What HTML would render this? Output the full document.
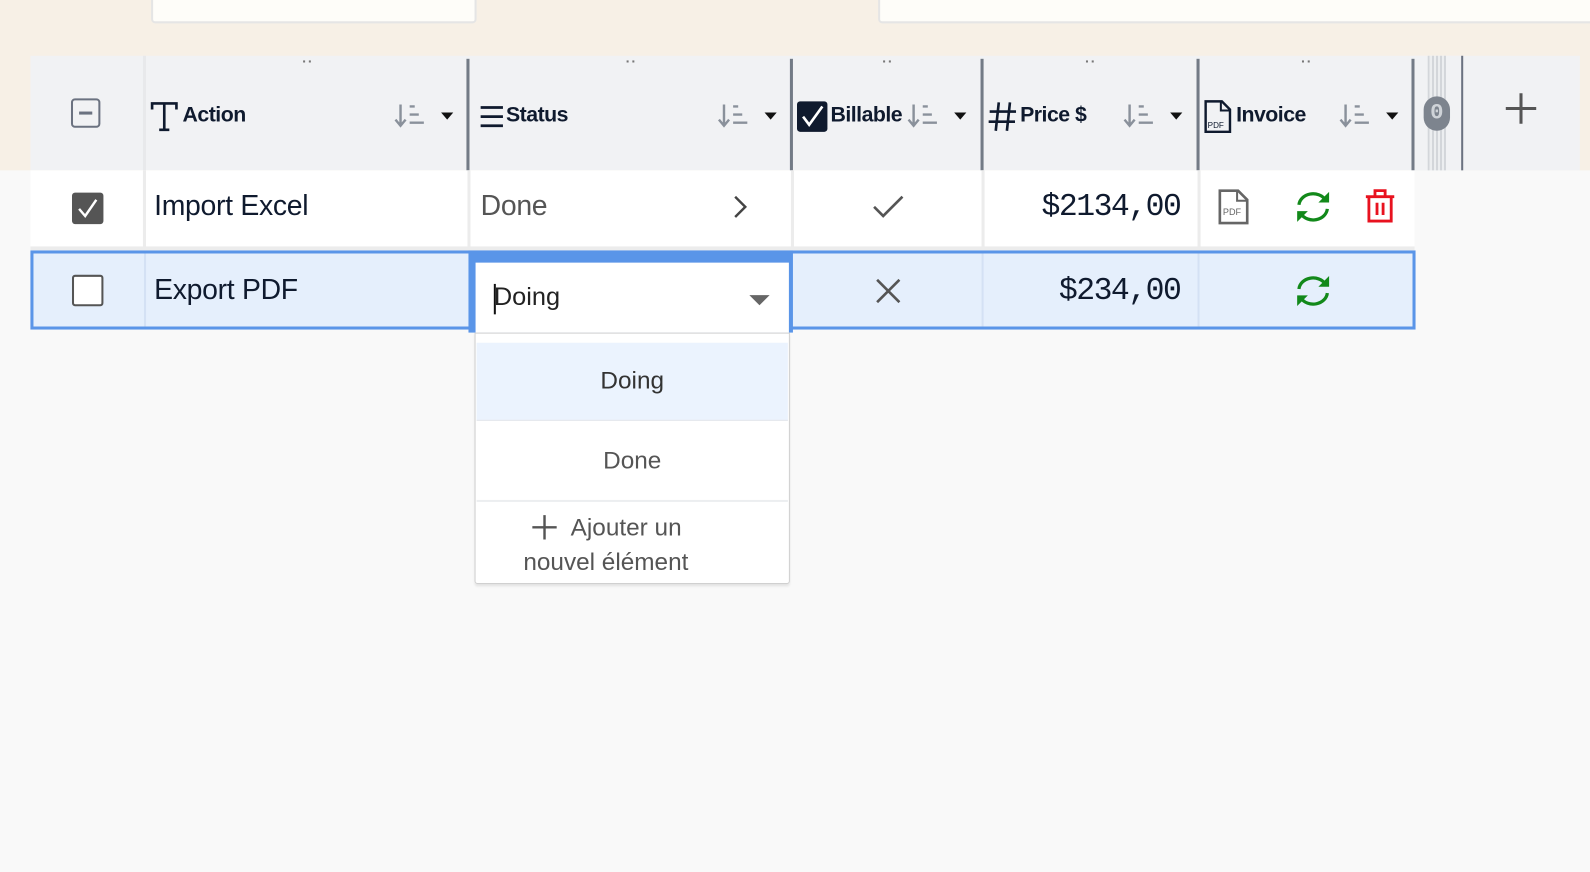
<!DOCTYPE html>
<html><head><meta charset="utf-8"><style>
*{margin:0;padding:0;box-sizing:border-box}
body{width:1590px;height:872px;background:#f9f9f9;position:relative;overflow:hidden;font-family:"Liberation Sans",sans-serif;color:#0f1a2e}
#w{position:absolute;left:0;top:0;width:1568px;height:860px;transform:scale(1.014);transform-origin:0 0}
.a{position:absolute}
.hd{font-weight:bold;font-size:21px;top:102px;letter-spacing:-0.5px}
.sep{width:3px;background:#737b86;top:58px;height:110px}
.dots{top:52px;font-size:14px;color:#777;letter-spacing:1px;font-weight:bold}
.sorti{top:101px}
.rt{font-size:28px;letter-spacing:-0.3px}
.mono{font:31px 'Liberation Mono',monospace;letter-spacing:-1.5px}
</style></head><body><div id="w">
<div class="a" style="left:0;top:0;width:1590px;height:168px;background:#f7f0e6"></div>
<div class="a" style="left:149px;top:-6px;width:321px;height:29px;background:#fefdf9;border:2px solid #e5e5e5;border-radius:4px"></div>
<div class="a" style="left:866px;top:-6px;width:740px;height:29px;background:#fefdf9;border:2px solid #e5e5e5;border-radius:4px"></div>
<div class="a" style="left:30px;top:55px;width:1528px;height:113px;background:#f1f2f4"></div>
<div class="a" style="left:141px;top:55px;width:3px;height:113px;background:#e8e9eb"></div>
<div class="a" style="left:70px;top:97px;width:29px;height:29px;border:2px solid #6b7280;border-radius:4px"><div class="a" style="left:6px;top:11px;width:13px;height:2.5px;background:#6b7280"></div></div>
<svg class="a" style="left:148px;top:100px" width="28" height="30" viewBox="0 0 28 30"><path d="M2 8V2h24v6M14 2v26M9 28h10" stroke="#0f1a2e" stroke-width="2.6" fill="none"/></svg>
<div class="a hd" style="left:180px">Action</div>
<div class="a sep" style="left:460px"></div><div class="a sep" style="left:779px"></div><div class="a sep" style="left:967px"></div><div class="a sep" style="left:1180px"></div><div class="a sep" style="left:1392px"></div>
<div class="a dots" style="left:298px">··</div><div class="a dots" style="left:617px">··</div><div class="a dots" style="left:870px">··</div><div class="a dots" style="left:1070px">··</div><div class="a dots" style="left:1283px">··</div>
<svg class="a" style="left:473px;top:103px" width="24" height="24"><path d="M1 3h22M1 12h22M1 21h22" stroke="#0f1a2e" stroke-width="2.8"/></svg>
<div class="a hd" style="left:499px">Status</div>
<div class="a" style="left:786px;top:100px;width:30px;height:30px;background:#0f1a2e;border-radius:3px"></div>
<svg class="a" style="left:786px;top:100px" width="30" height="30"><path d="M6 15l6 8L25 5" stroke="#fff" stroke-width="2.6" fill="none"/></svg>
<div class="a hd" style="left:819px">Billable</div>
<svg class="a" style="left:974px;top:99px" width="30" height="32"><path d="M11 2L8 30M22 2L19 30M2 11h26M1 21h26" stroke="#0f1a2e" stroke-width="2.6"/></svg>
<div class="a hd" style="left:1006px">Price $</div>
<svg class="a" style="left:1187px;top:98px" width="28" height="34"><path d="M2 2h16l8 8v22H2z" stroke="#0f1a2e" stroke-width="2.4" fill="none"/><path d="M17 2v9h9" stroke="#0f1a2e" stroke-width="2" fill="none"/><text x="4" y="28" font-size="8" font-family="Liberation Sans" fill="#0f1a2e">PDF</text></svg>
<div class="a hd" style="left:1219px">Invoice</div>
<svg class="a sorti" style="left:389px" width="60" height="26"><g stroke="#8a919b" stroke-width="2.4" fill="none"><path d="M6 2v20M1 17l5 6 5-6M15 4h5M15 12h9M15 20h14"/></g><path d="M46 10h12l-6 7z" fill="#111"/></svg>
<svg class="a sorti" style="left:708px" width="60" height="26"><g stroke="#8a919b" stroke-width="2.4" fill="none"><path d="M6 2v20M1 17l5 6 5-6M15 4h5M15 12h9M15 20h14"/></g><path d="M46 10h12l-6 7z" fill="#111"/></svg>
<svg class="a sorti" style="left:895px" width="60" height="26"><g stroke="#8a919b" stroke-width="2.4" fill="none"><path d="M6 2v20M1 17l5 6 5-6M15 4h5M15 12h9M15 20h14"/></g><path d="M46 10h12l-6 7z" fill="#111"/></svg>
<svg class="a sorti" style="left:1108px" width="60" height="26"><g stroke="#8a919b" stroke-width="2.4" fill="none"><path d="M6 2v20M1 17l5 6 5-6M15 4h5M15 12h9M15 20h14"/></g><path d="M46 10h12l-6 7z" fill="#111"/></svg>
<svg class="a sorti" style="left:1321px" width="60" height="26"><g stroke="#8a919b" stroke-width="2.4" fill="none"><path d="M6 2v20M1 17l5 6 5-6M15 4h5M15 12h9M15 20h14"/></g><path d="M46 10h12l-6 7z" fill="#111"/></svg>
<div class="a" style="left:1395px;top:55px;width:46px;height:113px;background:#f1f2f4"></div>
<div class="a" style="left:1408px;top:55px;width:18px;height:113px;background:repeating-linear-gradient(90deg,#d3d6da 0 2px,#eceef0 2px 4px)"></div>
<div class="a" style="left:1441px;top:55px;width:2px;height:113px;background:#6b7280"></div>
<div class="a" style="left:1404px;top:95px;width:26px;height:34px;background:#7d848e;border-radius:13px;color:#cfd3d8;font:bold 22px 'Liberation Mono',monospace;text-align:center;line-height:34px">0</div>
<svg class="a" style="left:1483px;top:90px" width="34" height="34"><path d="M17 2v30M2 17h30" stroke="#555" stroke-width="3"/></svg>
<div class="a" style="left:30px;top:168px;width:1365px;height:77px;background:#fff"></div>
<div class="a" style="left:141px;top:168px;width:3px;height:77px;background:#ececec"></div>
<div class="a" style="left:461px;top:168px;width:3px;height:77px;background:#ececec"></div>
<div class="a" style="left:780px;top:168px;width:3px;height:77px;background:#ececec"></div>
<div class="a" style="left:968px;top:168px;width:3px;height:77px;background:#ececec"></div>
<div class="a" style="left:1181px;top:168px;width:3px;height:77px;background:#ececec"></div>
<div class="a" style="left:30px;top:243px;width:1365px;height:4px;background:#ececec"></div>
<div class="a" style="left:71px;top:190px;width:31px;height:31px;background:#555;border-radius:3px"></div>
<svg class="a" style="left:71px;top:190px" width="31" height="31"><path d="M7 16l6 7L24 7" stroke="#fff" stroke-width="2.4" fill="none"/></svg>
<div class="a rt" style="left:152px;top:187px">Import Excel</div>
<div class="a rt" style="left:474px;top:187px;color:#555">Done</div>
<svg class="a" style="left:722px;top:192px" width="16" height="24"><path d="M3 2l10 10L3 22" stroke="#444" stroke-width="2.4" fill="none"/></svg>
<svg class="a" style="left:860px;top:192px" width="32" height="24"><path d="M2 12l9 9L30 2" stroke="#555" stroke-width="2.6" fill="none"/></svg>
<div class="a mono" style="left:971px;top:187px;width:193px;text-align:right">$2134,00</div>
<svg class="a" style="left:1201px;top:186px" width="32" height="36"><path d="M2 2h18l9 9v23H2z" stroke="#666" stroke-width="2.6" fill="#fff"/><path d="M19 2v10h10" stroke="#666" stroke-width="2" fill="none"/><text x="5" y="26" font-size="9" font-family="Liberation Sans" fill="#666">PDF</text></svg>
<svg class="a" style="left:1277px;top:188px" width="36" height="32" viewBox="0 0 36 32"><g stroke="#12891a" stroke-width="3.2" fill="none"><path d="M4 14A14 12 0 0 1 30 9"/><path d="M32 18A14 12 0 0 1 6 23"/></g><path d="M25 11l8 0 0-8z M11 21l-8 0 0 8z" fill="#12891a" stroke="#12891a" stroke-width="1.5"/></svg>
<svg class="a" style="left:1346px;top:186px" width="30" height="36"><g stroke="#e8121f" stroke-width="2.8" fill="none"><path d="M1 8h28M10 8V2h10v6M4 8v24h22V8M12 14v12M18 14v12"/></g></svg>
<div class="a" style="left:30px;top:247px;width:1366px;height:78px;background:#e5effc;border:3px solid #5a95e8"></div>
<div class="a" style="left:142px;top:250px;width:2px;height:72px;background:#d4e1f4"></div>
<div class="a" style="left:968px;top:250px;width:2px;height:72px;background:#d4e1f4"></div>
<div class="a" style="left:1181px;top:250px;width:2px;height:72px;background:#d4e1f4"></div>
<div class="a" style="left:71px;top:271px;width:31px;height:31px;border:2.5px solid #555;border-radius:3px;background:#fff"></div>
<div class="a rt" style="left:152px;top:270px">Export PDF</div>
<svg class="a" style="left:862px;top:273px" width="28" height="28"><path d="M3 3l22 22M25 3L3 25" stroke="#555" stroke-width="2.6"/></svg>
<div class="a mono" style="left:971px;top:270px;width:193px;text-align:right">$234,00</div>
<svg class="a" style="left:1277px;top:271px" width="36" height="32" viewBox="0 0 36 32"><g stroke="#12891a" stroke-width="3.2" fill="none"><path d="M4 14A14 12 0 0 1 30 9"/><path d="M32 18A14 12 0 0 1 6 23"/></g><path d="M25 11l8 0 0-8z M11 21l-8 0 0 8z" fill="#12891a" stroke="#12891a" stroke-width="1.5"/></svg>
<div class="a" style="left:462px;top:247px;width:320px;height:81px;background:#5a95e8"></div>
<div class="a" style="left:469px;top:259px;width:309px;height:69px;background:#fff"></div>
<div class="a" style="left:487px;top:280px;width:2px;height:30px;background:#111"></div>
<div class="a" style="left:487px;top:279px;font:25px 'Liberation Sans',sans-serif;color:#222">Doing</div>
<svg class="a" style="left:738px;top:290px" width="22" height="12"><path d="M1 1h20L11 11z" fill="#666"/></svg>
<div class="a" style="left:468px;top:328px;width:311px;height:248px;background:#fff;border:1px solid #d0d0d0;border-radius:0 0 3px 3px;box-shadow:0 2px 2px rgba(0,0,0,.08)"></div>
<div class="a" style="left:470px;top:338px;width:307px;height:77px;background:#ebf3fe;border-bottom:1px solid #e3e6ea"></div>
<div class="a" style="left:470px;top:362px;width:307px;text-align:center;font:24px 'Liberation Sans',sans-serif;color:#333">Doing</div>
<div class="a" style="left:470px;top:441px;width:307px;text-align:center;font:24px 'Liberation Sans',sans-serif;color:#555">Done</div>
<div class="a" style="left:470px;top:493px;width:307px;height:2px;background:#eceef0"></div>
<svg class="a" style="left:524px;top:507px" width="26" height="26"><path d="M13 1v24M1 13h24" stroke="#555" stroke-width="2.4"/></svg>
<div class="a" style="left:470px;top:504px;width:255px;text-align:center;font:24px/34px 'Liberation Sans',sans-serif;color:#555">&nbsp;&nbsp;&nbsp;&nbsp;&nbsp;&nbsp;Ajouter un<br>nouvel élément</div>
</div></body></html>
